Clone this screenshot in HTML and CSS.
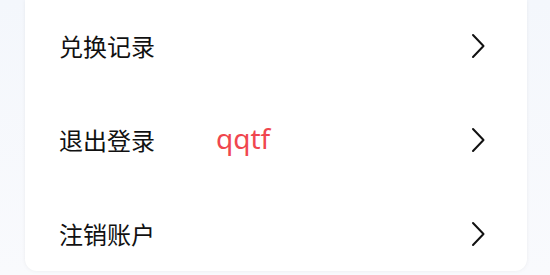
FILE: index.html
```html
<!DOCTYPE html>
<html lang="zh-CN">
<head>
<meta charset="utf-8">
<link rel="stylesheet" href="styles.css">
</head>
<body>
<div class="page">
  <div class="card">
    <div class="row">
      <span class="label">兑换记录</span>
      <svg class="chev" viewBox="0 0 14 26" width="14" height="26"><path d="M2 2 L12.5 13 L2 24" fill="none" stroke="#111" stroke-width="2" stroke-linecap="round" stroke-linejoin="round"/></svg>
    </div>
    <div class="row">
      <span class="label">退出登录</span>
      <span class="tag">qqtf</span>
      <svg class="chev" viewBox="0 0 14 26" width="14" height="26"><path d="M2 2 L12.5 13 L2 24" fill="none" stroke="#111" stroke-width="2" stroke-linecap="round" stroke-linejoin="round"/></svg>
    </div>
    <div class="row">
      <span class="label">注销账户</span>
      <svg class="chev" viewBox="0 0 14 26" width="14" height="26"><path d="M2 2 L12.5 13 L2 24" fill="none" stroke="#111" stroke-width="2" stroke-linecap="round" stroke-linejoin="round"/></svg>
    </div>
  </div>
</div>
</body>
</html>
```

FILE: styles.css
```css
html, body {
  margin: 0;
  padding: 0;
}
body {
  width: 550px;
  height: 275px;
  overflow: hidden;
  background: linear-gradient(180deg, #f4f7fc 0%, #f9fafd 100%);
  font-family: "Noto Sans CJK SC", "Noto Sans", sans-serif;
}
.page {
  padding: 0 23px 0 25px;
}
.card {
  background: #ffffff;
  border-radius: 0 0 12px 12px;
  box-shadow: 0 0 4px rgba(0, 0, 0, 0.06);
  padding: 11px 42px 2px 34px;
  display: flex;
  flex-direction: column;
  gap: 24px;
}
.row {
  height: 70px;
  display: flex;
  align-items: center;
}
.label {
  font-size: 24px;
  color: #111111;
  line-height: 1;
}
.tag {
  margin-left: 61px;
  margin-top: -4px;
  font-family: "Noto Sans", sans-serif;
  font-size: 28px;
  color: #f0464e;
  line-height: 1;
}
.chev {
  margin-left: auto;
  display: block;
}
```
